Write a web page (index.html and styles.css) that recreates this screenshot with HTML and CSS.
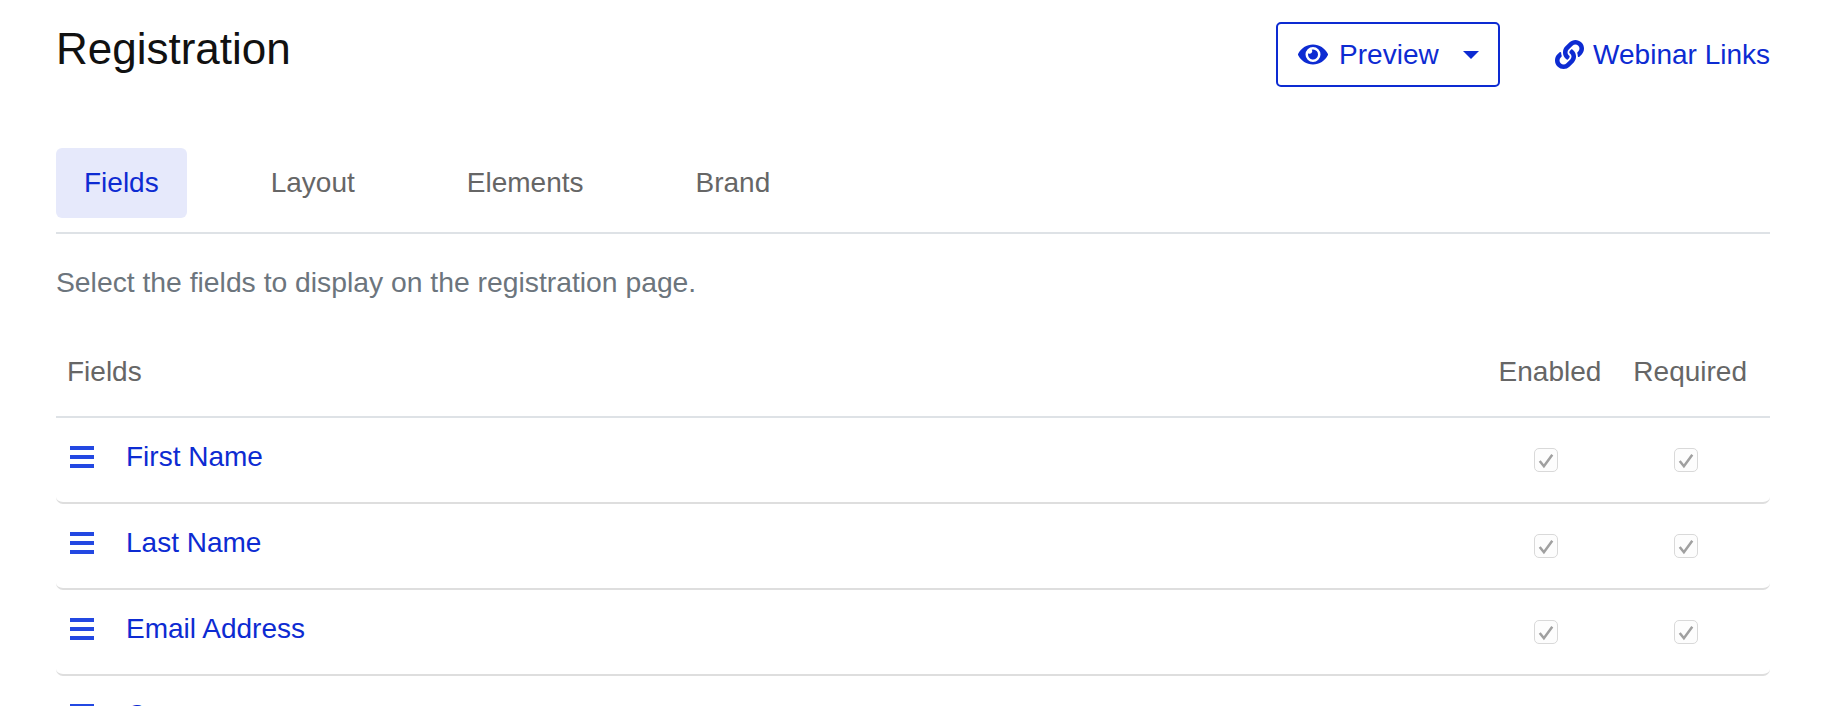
FILE: index.html
```html
<!DOCTYPE html>
<html lang="en">
<head>
    <meta charset="UTF-8">
    <meta name="viewport" content="width=device-width, initial-scale=1.0">
    <title>Registration</title>
    <link rel="stylesheet" href="styles.css">
</head>
<body>
    <div class="page-header">
        <h1>Registration</h1>
        <div class="header-actions">
            <a href="#" class="preview-button">
                <svg class="icon-eye" viewBox="0 0 576 512"><path fill="currentColor" d="M572.52 241.4C518.29 135.59 410.93 64 288 64S57.68 135.64 3.48 241.41a32.35 32.35 0 0 0 0 29.19C57.71 376.41 165.07 448 288 448s230.32-71.64 284.52-177.41a32.35 32.35 0 0 0 0-29.19zM288 400a144 144 0 1 1 144-144 143.93 143.93 0 0 1-144 144zm0-240a95.31 95.31 0 0 0-25.31 3.79 47.85 47.85 0 0 1-66.9 66.9A95.78 95.78 0 1 0 288 160z"/></svg>
                <span>Preview</span>
                <span class="caret"></span>
            </a>
            <a href="#" class="webinar-link">
                <svg class="icon-link" viewBox="0 0 512 512"><path fill="currentColor" d="M326.612 185.391c59.747 59.809 58.927 155.698.36 214.59-.11.12-.24.25-.36.37l-67.2 67.2c-59.27 59.27-155.699 59.262-214.96 0-59.27-59.26-59.27-155.7 0-214.96l37.106-37.106c9.84-9.84 26.786-3.3 27.294 10.606.648 17.722 3.826 35.527 9.69 52.721 1.986 5.822.567 12.262-3.783 16.612l-13.087 13.087c-28.026 28.026-28.905 73.66-1.155 101.96 28.024 28.579 74.086 28.749 102.325.51l67.2-67.19c28.191-28.191 28.073-73.757 0-101.83-3.701-3.694-7.429-6.564-10.341-8.569a16.037 16.037 0 0 1-6.947-12.606c-.396-10.567 3.348-21.456 11.698-29.806l21.054-21.055c5.521-5.521 14.182-6.199 20.584-1.731a152.482 152.482 0 0 1 20.522 17.197zM467.547 44.449c-59.261-59.262-155.69-59.27-214.96 0l-67.2 67.2c-.12.12-.25.25-.36.37-58.566 58.892-59.387 154.781.36 214.59a152.454 152.454 0 0 0 20.521 17.196c6.402 4.468 15.064 3.789 20.584-1.731l21.054-21.055c8.35-8.35 12.094-19.239 11.698-29.806a16.037 16.037 0 0 0-6.947-12.606c-2.912-2.005-6.64-4.875-10.341-8.569-28.073-28.073-28.191-73.639 0-101.83l67.2-67.19c28.239-28.239 74.3-28.069 102.325.51 27.75 28.3 26.872 73.934-1.155 101.96l-13.087 13.087c-4.35 4.35-5.769 10.79-3.783 16.612 5.864 17.194 9.042 34.999 9.69 52.721.509 13.906 17.454 20.446 27.294 10.606l37.106-37.106c59.271-59.259 59.271-155.699.001-214.959z"/></svg>
                <span>Webinar Links</span>
            </a>
        </div>
    </div>

    <div class="tabs">
        <a href="#" class="tab active">Fields</a>
        <a href="#" class="tab">Layout</a>
        <a href="#" class="tab">Elements</a>
        <a href="#" class="tab">Brand</a>
    </div>

    <p class="description">Select the fields to display on the registration page.</p>

    <div class="table-head">
        <div class="head-name">Fields</div>
        <div class="head-col head-enabled">Enabled</div>
        <div class="head-col head-required">Required</div>
    </div>

    <div class="field-row">
        <div class="drag-handle"><i></i><i></i><i></i></div>
        <a href="#" class="field-name">First Name</a>
        <div class="check-col"><span class="check"><svg viewBox="0 0 21 21"><path d="M4.5 11.5l4 5 8-11"/></svg></span></div>
        <div class="check-col"><span class="check"><svg viewBox="0 0 21 21"><path d="M4.5 11.5l4 5 8-11"/></svg></span></div>
    </div>
    <div class="field-row">
        <div class="drag-handle"><i></i><i></i><i></i></div>
        <a href="#" class="field-name">Last Name</a>
        <div class="check-col"><span class="check"><svg viewBox="0 0 21 21"><path d="M4.5 11.5l4 5 8-11"/></svg></span></div>
        <div class="check-col"><span class="check"><svg viewBox="0 0 21 21"><path d="M4.5 11.5l4 5 8-11"/></svg></span></div>
    </div>
    <div class="field-row">
        <div class="drag-handle"><i></i><i></i><i></i></div>
        <a href="#" class="field-name">Email Address</a>
        <div class="check-col"><span class="check"><svg viewBox="0 0 21 21"><path d="M4.5 11.5l4 5 8-11"/></svg></span></div>
        <div class="check-col"><span class="check"><svg viewBox="0 0 21 21"><path d="M4.5 11.5l4 5 8-11"/></svg></span></div>
    </div>
    <div class="field-row">
        <div class="drag-handle"><i></i><i></i><i></i></div>
        <a href="#" class="field-name">Company</a>
        <div class="check-col"><span class="check"><svg viewBox="0 0 21 21"><path d="M4.5 11.5l4 5 8-11"/></svg></span></div>
        <div class="check-col"><span class="check"><svg viewBox="0 0 21 21"><path d="M4.5 11.5l4 5 8-11"/></svg></span></div>
    </div>
</body>
</html>
```

FILE: styles.css
```css
html, body {
    height: 706px;
    overflow: hidden;
}
body {
    font-family: "Liberation Sans", Arial, sans-serif;
    font-size: 28px;
    background-color: white;
    color: #666;
    margin: 0;
    padding: 0 68px 0 56px;
}
a {
    text-decoration: none;
    color: #0d2bd2;
}
.page-header {
    display: flex;
    justify-content: space-between;
    align-items: flex-start;
    height: 148px;
}
h1 {
    margin: 26px 0 0;
    font-size: 44px;
    font-weight: normal;
    line-height: 46px;
    color: #111;
}
.header-actions {
    display: flex;
    align-items: center;
    margin-top: 22px;
}
.preview-button {
    display: flex;
    align-items: center;
    box-sizing: border-box;
    width: 224px;
    height: 65px;
    padding-left: 20px;
    border: 2px solid #0d2bd2;
    border-radius: 5px;
}
.icon-eye {
    width: 30px;
    height: 27px;
    margin-right: 11px;
}
.caret {
    width: 0;
    height: 0;
    margin-left: 24px;
    border-left: 8px solid transparent;
    border-right: 8px solid transparent;
    border-top: 8px solid #0d2bd2;
}
.webinar-link {
    display: flex;
    align-items: center;
    margin-left: 55px;
}
.icon-link {
    width: 29px;
    height: 29px;
    margin-right: 9px;
}
.tabs {
    display: flex;
    gap: 56px;
    height: 86px;
    border-bottom: 2px solid #dee2e6;
    box-sizing: border-box;
}
.tab {
    box-sizing: border-box;
    height: 70px;
    padding: 0 28px;
    line-height: 70px;
    color: #666;
    border-radius: 6px;
}
.tab.active {
    background-color: #e6e9fb;
    color: #0d2bd2;
}
.description {
    margin: 0;
    height: 100px;
    padding-top: 33px;
    box-sizing: border-box;
    font-size: 28.3px;
    line-height: 30px;
    color: #6c757d;
}
.table-head {
    display: flex;
    align-items: center;
    box-sizing: border-box;
    height: 84px;
    padding: 0 23px 6px 11px;
    border-bottom: 2px solid #dee2e6;
}
.head-name {
    flex: 1;
}
.head-required {
    margin-left: 32px;
}
.field-row {
    display: flex;
    align-items: center;
    box-sizing: border-box;
    height: 86px;
    padding-bottom: 6px;
    border-bottom: 2px solid #dedede;
    border-radius: 0 0 7px 7px;
}
.drag-handle {
    display: flex;
    flex-direction: column;
    gap: 4.5px;
    width: 24px;
    margin-left: 14px;
}
.drag-handle i {
    display: block;
    height: 4.5px;
    background-color: #2348e2;
}
.field-name {
    flex: 1;
    margin-left: 32px;
}
.check-col {
    width: 140px;
    display: flex;
    justify-content: center;
}
.check-col:last-child {
    margin-right: 14px;
}
.check {
    display: block;
    box-sizing: border-box;
    width: 24px;
    height: 24px;
    margin-top: 6px;
    border: 1px solid #d9d9d9;
    border-radius: 5px;
    background-color: #fdfdfd;
}
.check svg {
    display: block;
    width: 22px;
    height: 22px;
    fill: none;
    stroke: #a0a0a0;
    stroke-width: 2.4;
}
```
